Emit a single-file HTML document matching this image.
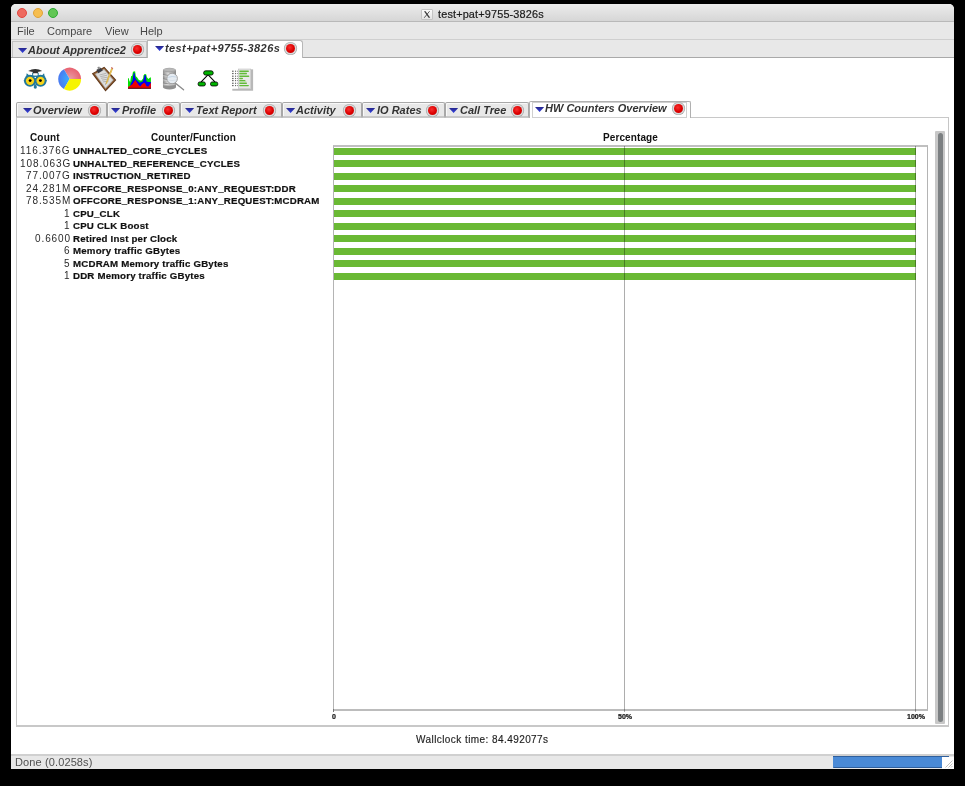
<!DOCTYPE html>
<html><head><meta charset="utf-8">
<style>
html,body{margin:0;padding:0;}
body{width:965px;height:786px;background:#000;position:relative;overflow:hidden;font-family:"Liberation Sans",sans-serif;}
.a{position:absolute;will-change:transform;}
#win{left:11px;top:4px;width:943px;height:765px;background:#fff;border-radius:5px 5px 0 0;overflow:hidden;}
#title{left:11px;top:4px;width:943px;height:17px;background:linear-gradient(#ececec,#d6d6d6);border-bottom:1px solid #b9b9b9;border-radius:5px 5px 0 0;}
.tl{width:10px;height:10px;border-radius:50%;top:8px;box-sizing:border-box;}
#menu{left:11px;top:22px;width:943px;height:17px;background:#e8e8e8;border-bottom:1px solid #cfcfcf;}
.mi{top:25px;font-size:11px;color:#484848;white-space:nowrap;}
#tabs1{left:11px;top:40px;width:943px;height:17px;background:#e8e8e8;border-bottom:1px solid #a9a9a9;}
.t{font-size:10px;font-weight:bold;font-style:italic;color:#333;white-space:nowrap;transform:scaleX(1.1);transform-origin:0 0;}
.tri{width:9.2px;height:5px;background:linear-gradient(#26268a,#3444e6);clip-path:polygon(0 0,100% 0,50% 100%);}
.stop{width:9px;height:9px;border-radius:50%;box-shadow:0 0 0 1.4px #dadada,0 0 0 2.1px #a6a6a6;background:radial-gradient(circle at 42% 38%,#f83030 0,#dc0000 55%,#bc0000 100%);}
.lbl{font-size:10px;font-weight:bold;color:#111;white-space:nowrap;letter-spacing:0px;}
.nm{font-size:9.7px;font-weight:bold;color:#111;white-space:nowrap;letter-spacing:0.19px;-webkit-text-stroke:0.2px #111;}
.cnt{font-size:10px;color:#2a2a2a;white-space:nowrap;letter-spacing:0.9px;text-align:right;}
.bar{left:334px;width:582px;height:7px;background:#6ab934;}
.tab2{top:102px;height:16px;box-sizing:border-box;border:1px solid #a8a8a8;border-bottom:2px solid #c8c8c8;background:#e8e8e8;box-shadow:inset 1px 1px 0 #f8f8f8;border-radius:2px 2px 0 0;}
.ax{font-size:7px;font-weight:bold;color:#111;white-space:nowrap;-webkit-text-stroke:0.2px #111;}
</style></head><body>
<div id="win" class="a"></div>
<div id="title" class="a"></div>
<div class="a tl" style="left:17px;background:#ee6a5f;border:1px solid #e2463f;"></div>
<div class="a tl" style="left:32.5px;background:#f6be50;border:1px solid #dfa23a;"></div>
<div class="a tl" style="left:48px;background:#62c655;border:1px solid #2eab33;"></div>
<div class="a" style="left:421px;top:8.5px;width:11.5px;height:10.7px;box-sizing:border-box;border:1px solid #c4c4c4;border-radius:1px;background:linear-gradient(#fbfbfb,#e4e4e4);"></div>
<svg class="a" style="left:421px;top:8.5px;" width="12" height="11"><path d="M3 2.2 L4.6 2.2 L9.2 8.8 L7.6 8.8 Z" fill="#3a3a3a"/><path d="M8.6 2.2 L3.2 8.8" stroke="#3a3a3a" stroke-width="0.8"/></svg>
<div class="a" style="left:438px;top:8.3px;font-size:10.9px;letter-spacing:0.15px;color:#1a1a1a;-webkit-text-stroke:0.2px #1a1a1a;white-space:nowrap;">test+pat+9755-3826s</div>

<div id="menu" class="a"></div>
<div class="a mi" style="left:17px;">File</div>
<div class="a mi" style="left:46.5px;">Compare</div>
<div class="a mi" style="left:104.5px;">View</div>
<div class="a mi" style="left:140px;">Help</div>

<div id="tabs1" class="a"></div>
<div class="a" style="left:12px;top:41px;width:135px;height:16px;box-sizing:border-box;border:1px solid #c4c4c4;border-bottom:none;background:#e6e6e6;"></div>
<div class="a tri" style="left:17.5px;top:48px;"></div>
<div class="a t" style="left:28px;top:44.5px;">About Apprentice2</div>
<div class="a stop" style="left:133.4px;top:45.3px;"></div>
<div class="a" style="left:147px;top:40px;width:156px;height:18px;box-sizing:border-box;border:1px solid #b8b8b8;border-bottom:none;background:#fff;border-radius:0 3px 0 0;"></div>
<div class="a tri" style="left:155px;top:46px;"></div>
<div class="a t" style="left:165px;top:43px;letter-spacing:0.36px;">test+pat+9755-3826s</div>
<div class="a stop" style="left:285.5px;top:44.0px;"></div>


<!-- owl -->
<svg class="a" style="left:20px;top:64px;" width="32" height="30" viewBox="0 0 838 786">
<g fill="#22789a">
<path d="M175 245 L240 295 L580 295 L630 240 L650 340 L160 340 Z"/>
<circle cx="262" cy="440" r="158"/><circle cx="538" cy="440" r="158"/>
<rect x="318" y="228" width="32" height="90"/><rect x="458" y="228" width="32" height="90"/>
<circle cx="400" cy="605" r="42"/>
<path d="M350 530 L450 530 L400 615Z"/>
<circle cx="115" cy="440" r="18"/><circle cx="685" cy="440" r="18"/>
</g>
<circle cx="262" cy="440" r="108" fill="#f8d418"/><circle cx="538" cy="440" r="108" fill="#f8d418"/>
<circle cx="265" cy="435" r="38" fill="#000"/><circle cx="535" cy="435" r="38" fill="#000"/>
<path d="M215 185 Q300 135 400 130 Q500 135 580 185 Q500 215 400 215 Q300 215 215 185Z" fill="#303030"/>
<rect x="335" y="198" width="135" height="48" fill="#303030"/>
<rect x="350" y="250" width="108" height="50" fill="#fff"/>
<rect x="382" y="338" width="36" height="26" fill="#fff"/>
</svg>
<!-- pie -->
<svg class="a" style="left:54px;top:64px;" width="32" height="30" viewBox="0 0 838 786">
<defs>
<radialGradient id="gp" cx="410" cy="395" r="310" gradientUnits="userSpaceOnUse"><stop offset="0" stop-color="#e8a0a8"/><stop offset="1" stop-color="#e8606e"/></radialGradient>
<radialGradient id="gb" cx="410" cy="395" r="310" gradientUnits="userSpaceOnUse"><stop offset="0" stop-color="#3ab0ff"/><stop offset="1" stop-color="#4a78f0"/></radialGradient>
</defs>
<path d="M410 395 L710 395 A300 300 0 0 0 260 135 Z" fill="url(#gp)"/>
<path d="M410 395 L260 135 A300 300 0 0 0 260 655 Z" fill="url(#gb)"/>
<path d="M410 395 L260 655 A300 300 0 0 0 710 395 Z" fill="#f6f400"/>
</svg>
<!-- clipboard -->
<svg class="a" style="left:88px;top:62px;" width="32" height="32" viewBox="0 0 786 786">
<path d="M400 115 L695 440 L430 725 L95 280 Z" fill="#5a3216"/>
<path d="M400 140 L665 440 L430 695 L125 285 Z" fill="#8a5a30"/>
<path d="M395 175 L630 440 L430 655 L170 295 Z" fill="#bcbcbc"/>
<path d="M392 200 L600 440 L432 625 L200 305 Z" fill="#dedede"/>
<path d="M280 320 L440 280 M300 360 L470 325 M320 400 L500 370 M345 445 L520 415 M365 490 L510 465" stroke="#9a9a9a" stroke-width="16"/>
<path d="M205 195 L300 135 L365 205 L255 275 Z" fill="#3a3a40"/>
<path d="M230 130 L275 110 L305 165 L250 185Z" fill="#8a8a8a"/>
<path d="M572 145 L612 170 L468 520 L440 545 L438 508 Z" fill="#d4aa3a"/>
<path d="M590 155 L605 165 L462 515 L450 520Z" fill="#f0d070"/>
<path d="M568 125 L618 148 L612 172 L572 147Z" fill="#c04848"/>
<path d="M440 545 L425 570 L438 508Z" fill="#555"/>
</svg>
<!-- chart -->
<svg class="a" style="left:124px;top:64px;" width="32" height="30" viewBox="0 0 838 786">
<path d="M105 380 L125 370 L140 440 L160 470 L185 320 L215 310 L235 200 L290 190 L310 320 L340 350 L390 420 L450 440 L500 380 L510 300 L540 265 L580 270 L600 350 L640 390 L690 350 L705 360 L705 640 L105 640Z" fill="#00e000"/>
<path d="M105 620 L160 590 L175 520 L220 440 L230 380 L255 230 L280 240 L290 350 L330 420 L410 490 L440 480 L490 460 L525 360 L540 290 L570 290 L590 460 L640 470 L705 470 L705 640 L105 640Z" fill="#0000f0"/>
<path d="M105 600 L160 570 L220 530 L280 440 L300 420 L330 470 L390 560 L430 590 L470 530 L530 490 L560 520 L590 580 L640 590 L690 510 L705 490 L705 640 L105 640Z" fill="#f00000"/>
<rect x="105" y="622" width="600" height="24" fill="#5a1010"/>
</svg>
<!-- db search -->
<svg class="a" style="left:158px;top:64px;" width="32" height="30" viewBox="0 0 838 786">
<defs><linearGradient id="gd" x1="0" x2="1"><stop offset="0" stop-color="#8e8e8e"/><stop offset="0.4" stop-color="#dcdcdc"/><stop offset="1" stop-color="#848484"/></linearGradient></defs>
<rect x="130" y="160" width="340" height="450" fill="url(#gd)"/>
<ellipse cx="300" cy="610" rx="170" ry="55" fill="#909090"/>
<ellipse cx="300" cy="160" rx="170" ry="62" fill="#a4a4a4"/>
<ellipse cx="300" cy="150" rx="150" ry="40" fill="#b8b8b8"/>
<path d="M130 280 Q300 330 470 280 M130 390 Q300 440 470 390 M130 500 Q300 550 470 500" stroke="#787878" stroke-width="18" fill="none"/>
<path d="M135 305 Q300 355 465 305 M135 415 Q300 465 465 415 M135 525 Q300 575 465 525" stroke="#e8e8e8" stroke-width="14" fill="none"/>
<path d="M475 515 L670 675" stroke="#8a8a8a" stroke-width="34" stroke-linecap="round"/>
<circle cx="370" cy="380" r="138" fill="#e6ecf2" stroke="#9a9a9a" stroke-width="24"/>
<path d="M270 350 Q370 310 470 340" stroke="#c4d4e4" stroke-width="26" fill="none"/>
<path d="M260 420 Q370 450 470 420" stroke="#d4dce4" stroke-width="20" fill="none"/>
</svg>
<!-- tree -->
<svg class="a" style="left:192px;top:64px;" width="32" height="30" viewBox="0 0 838 786">
<path d="M410 290 L240 470 M430 290 L600 470" stroke="#000" stroke-width="28"/>
<rect x="305" y="180" width="250" height="110" rx="50" fill="#00b400" stroke="#000" stroke-width="22"/>
<rect x="160" y="470" width="190" height="105" rx="45" fill="#00b400" stroke="#000" stroke-width="22"/>
<rect x="485" y="470" width="190" height="105" rx="45" fill="#00b400" stroke="#000" stroke-width="22"/>
</svg>
<!-- report -->
<svg class="a" style="left:226px;top:64px;" width="32" height="30" viewBox="0 0 838 786">
<rect x="165" y="140" width="545" height="560" fill="#b8b8b8"/>
<rect x="150" y="125" width="500" height="525" fill="#fff"/>
<rect x="322" y="132" width="326" height="505" fill="#e8e8e8" stroke="#bcbcbc" stroke-width="16"/>
<g fill="#62bb3a">
<rect x="345" y="172" width="255" height="36" rx="18"/>
<rect x="345" y="232" width="205" height="36" rx="18"/>
<rect x="345" y="300" width="265" height="40" rx="18"/>
<rect x="345" y="362" width="100" height="36" rx="18"/>
<rect x="345" y="418" width="165" height="36" rx="18"/>
<rect x="345" y="485" width="205" height="40" rx="18"/>
<rect x="345" y="548" width="255" height="36" rx="18"/>
</g>
<g fill="#a8d890"><rect x="345" y="272" width="200" height="22" rx="10"/><rect x="345" y="456" width="190" height="22" rx="10"/></g>
<g fill="#5a5a5a"><rect x="160" y="174" width="38" height="32"/><rect x="235" y="174" width="24" height="32"/><rect x="285" y="176" width="20" height="28"/><rect x="160" y="234" width="38" height="32"/><rect x="235" y="234" width="24" height="32"/><rect x="285" y="236" width="20" height="28"/><rect x="160" y="304" width="38" height="32"/><rect x="235" y="304" width="24" height="32"/><rect x="285" y="306" width="20" height="28"/><rect x="160" y="364" width="38" height="32"/><rect x="235" y="364" width="24" height="32"/><rect x="285" y="366" width="20" height="28"/><rect x="160" y="419" width="38" height="32"/><rect x="235" y="419" width="24" height="32"/><rect x="285" y="421" width="20" height="28"/><rect x="160" y="489" width="38" height="32"/><rect x="235" y="489" width="24" height="32"/><rect x="285" y="491" width="20" height="28"/><rect x="160" y="549" width="38" height="32"/><rect x="235" y="549" width="24" height="32"/><rect x="285" y="551" width="20" height="28"/></g>
</svg>

<!-- tab row 2 -->
<div class="a" style="left:16px;top:117px;width:933px;height:609.8px;box-sizing:border-box;border:1px solid #c6c6c6;border-top-color:#c8c8c8;border-bottom:2px solid #c8c8c8;"></div>
<div class="a tab2" style="left:16px;width:91px;"></div>
<div class="a tri" style="left:22.5px;top:108px;"></div>
<div class="a t" style="left:33px;top:104.8px;">Overview</div>
<div class="a stop" style="left:90.1px;top:105.7px;"></div>
<div class="a tab2" style="left:107px;width:73px;"></div>
<div class="a tri" style="left:111.2px;top:108px;"></div>
<div class="a t" style="left:121.7px;top:104.8px;">Profile</div>
<div class="a stop" style="left:163.5px;top:105.6px;"></div>
<div class="a tab2" style="left:180px;width:102px;"></div>
<div class="a tri" style="left:185.4px;top:108px;"></div>
<div class="a t" style="left:195.9px;top:104.8px;">Text Report</div>
<div class="a stop" style="left:265.0px;top:105.6px;"></div>
<div class="a tab2" style="left:282px;width:80px;"></div>
<div class="a tri" style="left:285.9px;top:108px;"></div>
<div class="a t" style="left:296.4px;top:104.8px;">Activity</div>
<div class="a stop" style="left:344.8px;top:105.6px;"></div>
<div class="a tab2" style="left:362px;width:83px;"></div>
<div class="a tri" style="left:366.3px;top:108px;"></div>
<div class="a t" style="left:376.8px;top:104.8px;">IO Rates</div>
<div class="a stop" style="left:428.2px;top:105.6px;"></div>
<div class="a tab2" style="left:445px;width:84px;"></div>
<div class="a tri" style="left:449.2px;top:108px;"></div>
<div class="a t" style="left:459.7px;top:104.8px;">Call Tree</div>
<div class="a stop" style="left:513.2px;top:105.6px;"></div>
<div class="a" style="left:529px;top:100.6px;width:162px;height:17.4px;box-sizing:border-box;border:1px solid #b0b0b0;border-bottom:none;background:#fff;border-radius:2px 2px 0 0;"></div>
<div class="a" style="left:532px;top:102px;width:155px;height:15.5px;box-sizing:border-box;border:1px solid #d0d0d0;background:#fff;"></div>
<div class="a tri" style="left:535px;top:106.7px;"></div>
<div class="a t" style="left:545px;top:103px;">HW Counters Overview</div>
<div class="a stop" style="left:673.5px;top:103.9px;"></div>


<!-- content -->
<div class="a lbl" style="left:29.6px;top:132.2px;letter-spacing:0.15px;">Count</div>
<div class="a lbl" style="left:150.5px;top:132.2px;letter-spacing:0.1px;">Counter/Function</div>
<div class="a lbl" style="left:602.6px;top:132.2px;letter-spacing:0.1px;">Percentage</div>
<div class="a cnt" style="right:894.2px;top:145.0px;">116.376G</div>
<div class="a nm" style="left:73px;top:145.1px;">UNHALTED_CORE_CYCLES</div>
<div class="a cnt" style="right:894.2px;top:157.5px;">108.063G</div>
<div class="a nm" style="left:73px;top:157.6px;">UNHALTED_REFERENCE_CYCLES</div>
<div class="a cnt" style="right:894.2px;top:170.0px;">77.007G</div>
<div class="a nm" style="left:73px;top:170.1px;">INSTRUCTION_RETIRED</div>
<div class="a cnt" style="right:894.2px;top:182.5px;">24.281M</div>
<div class="a nm" style="left:73px;top:182.6px;">OFFCORE_RESPONSE_0:ANY_REQUEST:DDR</div>
<div class="a cnt" style="right:894.2px;top:195.0px;">78.535M</div>
<div class="a nm" style="left:73px;top:195.1px;">OFFCORE_RESPONSE_1:ANY_REQUEST:MCDRAM</div>
<div class="a cnt" style="right:894.2px;top:207.5px;">1</div>
<div class="a nm" style="left:73px;top:207.6px;">CPU_CLK</div>
<div class="a cnt" style="right:894.2px;top:220.0px;">1</div>
<div class="a nm" style="left:73px;top:220.1px;">CPU CLK Boost</div>
<div class="a cnt" style="right:894.2px;top:232.5px;">0.6600</div>
<div class="a nm" style="left:73px;top:232.6px;">Retired Inst per Clock</div>
<div class="a cnt" style="right:894.2px;top:245.0px;">6</div>
<div class="a nm" style="left:73px;top:245.1px;">Memory traffic GBytes</div>
<div class="a cnt" style="right:894.2px;top:257.5px;">5</div>
<div class="a nm" style="left:73px;top:257.6px;">MCDRAM Memory traffic GBytes</div>
<div class="a cnt" style="right:894.2px;top:270.0px;">1</div>
<div class="a nm" style="left:73px;top:270.1px;">DDR Memory traffic GBytes</div>
<div class="a" style="left:333px;top:145px;width:595px;height:565.6px;box-sizing:border-box;border:1px solid #b4b4b4;border-top:2px solid #c0c0c0;border-bottom:2px solid #bcbcbc;"></div>
<div class="a bar" style="top:147.60px;"></div>
<div class="a bar" style="top:160.14px;"></div>
<div class="a bar" style="top:172.68px;"></div>
<div class="a bar" style="top:185.22px;"></div>
<div class="a bar" style="top:197.76px;"></div>
<div class="a bar" style="top:210.30px;"></div>
<div class="a bar" style="top:222.84px;"></div>
<div class="a bar" style="top:235.38px;"></div>
<div class="a bar" style="top:247.92px;"></div>
<div class="a bar" style="top:260.46px;"></div>
<div class="a bar" style="top:273.00px;"></div>
<div class="a" style="left:624px;top:146px;width:1px;height:566px;background:rgba(0,0,0,0.32);"></div>
<div class="a" style="left:915px;top:146px;width:1px;height:566px;background:rgba(0,0,0,0.32);"></div>
<div class="a" style="left:333px;top:709px;width:1px;height:3px;background:#777;"></div>
<div class="a ax" style="left:332px;top:713px;">0</div>
<div class="a ax" style="left:618px;top:713px;">50%</div>
<div class="a ax" style="left:907px;top:713px;">100%</div>
<div class="a" style="left:935px;top:131px;width:10px;height:593px;background:#c8c8c8;border-radius:1px;"></div>
<div class="a" style="left:938px;top:133px;width:5px;height:589px;background:#7c8082;border-radius:2.5px;"></div>
<div class="a" style="left:416px;top:734px;font-size:10px;letter-spacing:0.43px;color:#1e1e1e;-webkit-text-stroke:0.15px #1e1e1e;white-space:nowrap;">Wallclock time: 84.492077s</div>
<div class="a" style="left:11px;top:754px;width:943px;height:15px;background:#e8e8e8;border-top:2px solid #d0d0d0;box-sizing:border-box;"></div>
<div class="a" style="left:15px;top:756px;font-size:11px;letter-spacing:0.12px;color:#505050;white-space:nowrap;">Done (0.0258s)</div>
<div class="a" style="left:833px;top:756px;width:116px;height:1px;background:#2f5f9c;"></div>
<div class="a" style="left:833px;top:757px;width:109px;height:11px;background:#4a8ad6;border-bottom:1px solid #2f5f9c;box-sizing:border-box;border-radius:0 0 0 1px;"></div>
<div class="a" style="left:942px;top:757px;width:12px;height:12px;background:#fff;"></div>
<svg class="a" style="left:942px;top:757px;" width="12" height="11"><path d="M3.5 10.5 L10.5 3.5 M6.5 10.5 L10.5 6.5 M9 10.5 L10.5 9" stroke="#b8b8b8" stroke-width="0.9"/></svg>

</body></html>
